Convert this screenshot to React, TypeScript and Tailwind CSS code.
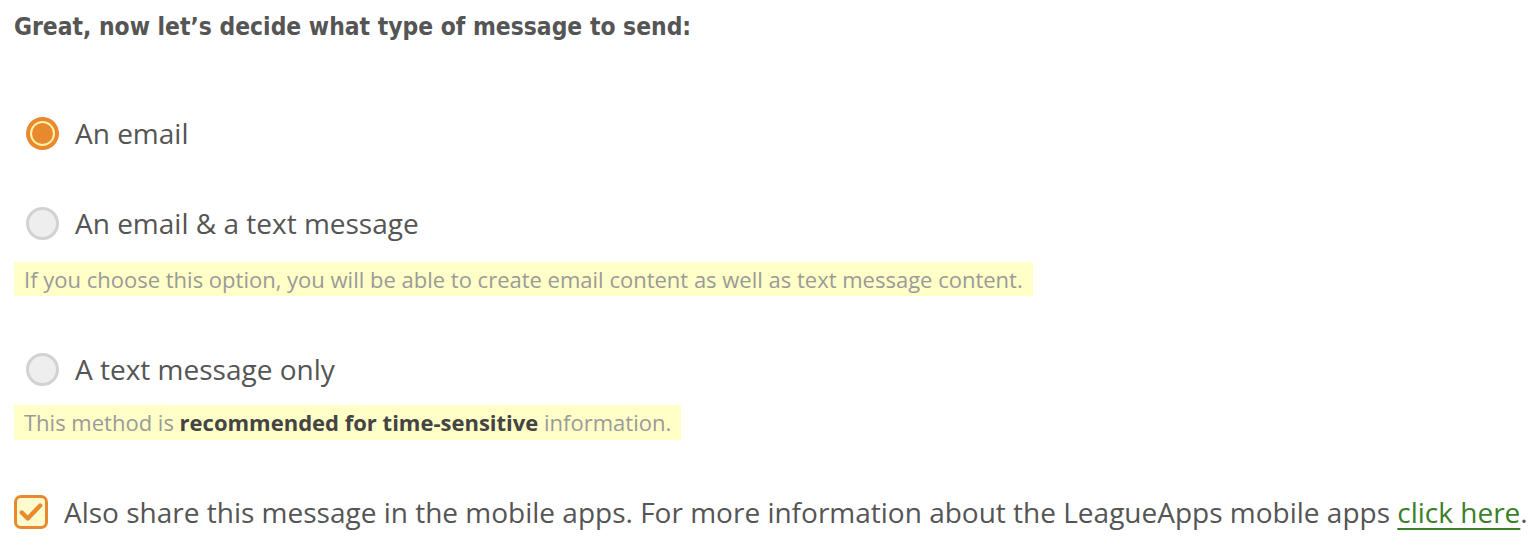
const body = "font-['Open_Sans',sans-serif]";

function Radio({ checked }: { checked?: boolean }) {
  if (checked) {
    return (
      <span className="flex h-[33px] w-[33px] shrink-0 items-center justify-center rounded-full bg-[#e8892f]">
        <span className="h-[25px] w-[25px] rounded-full border-2 border-[#fff3a6] bg-[#e8892f]" />
      </span>
    );
  }
  return <span className="h-[33px] w-[33px] shrink-0 rounded-full border-[3px] border-[#d2d2d2] bg-[#eeeeee]" />;
}

function Option({ label, checked }: { label: string; checked?: boolean }) {
  return (
    <label className="flex items-center gap-[16px] pl-[12px]">
      <Radio checked={checked} />
      <span className="text-[28px] leading-[36px] text-[#555]">{label}</span>
    </label>
  );
}

export default function App() {
  return (
    <div className={`${body} bg-white pl-[14px] pt-[12px] text-[#555]`}>
      <h2 className="font-['DejaVu_Sans_Condensed','DejaVu_Sans',sans-serif] text-[24.4px] font-bold leading-[30px] text-[#555]">
        Great, now let’s decide what type of message to send:
      </h2>

      <div className="mt-[73px]">
        <Option label="An email" checked />
      </div>

      <div className="mt-[54px]">
        <Option label="An email & a text message" />
      </div>
      <p className="mt-[21px] w-fit bg-[#ffffc7] px-[10px] py-[2px] text-[22px] leading-[30px] text-[#9a9a9a]">
        If you choose this option, you will be able to create email content as well as text message content.
      </p>

      <div className="mt-[55px]">
        <Option label="A text message only" />
      </div>
      <p className="mt-[18px] w-fit bg-[#ffffc7] px-[10px] py-[2px] text-[22px] leading-[31px] text-[#9a9a9a]">
        This method is <strong className="font-bold text-[#444]">recommended for time-sensitive</strong> information.
      </p>

      <label className="mt-[54px] flex items-center gap-[16px]">
        <span className="flex h-[34px] w-[34px] shrink-0 items-center justify-center rounded-[7px] border-[3px] border-[#e8892f] bg-[#fffbcf]">
          <svg viewBox="0 0 24 24" className="h-[26px] w-[26px]" fill="none" stroke="#e8892f" strokeWidth="4" strokeLinecap="round" strokeLinejoin="round">
            <path d="M3.5 12.5l5.5 5.5L20.5 6" />
          </svg>
        </span>
        <span className="text-[28px] leading-[36px] text-[#555]">
          Also share this message in the mobile apps. For more information about the LeagueApps mobile apps{" "}
          <a href="#" className="text-[#3c7f2a] underline underline-offset-[5px]">
            click here
          </a>
          .
        </span>
      </label>
    </div>
  );
}
